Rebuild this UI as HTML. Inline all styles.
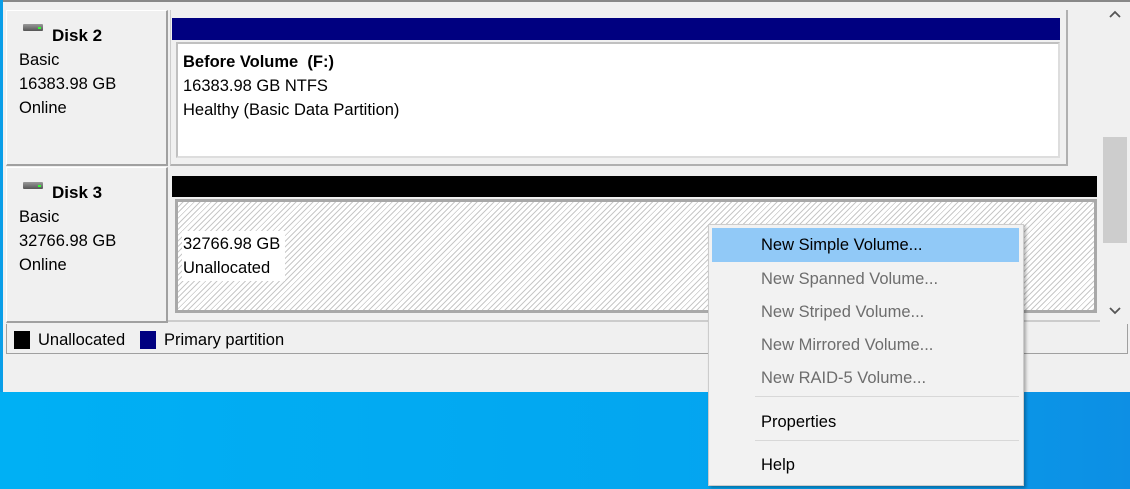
<!DOCTYPE html>
<html><head><style>
*{margin:0;padding:0;box-sizing:border-box}
body{width:1130px;height:489px;overflow:hidden;position:relative;background:linear-gradient(90deg,#00b0f4 0%,#03a6f0 60%,#0d8fe4 100%);font-family:"Liberation Sans",sans-serif;font-size:16.5px;color:#000}
.a{position:absolute}
.win{left:3px;top:0;width:1127px;height:392px;background:#f0f0f0;border-top:2px solid #888}
.lbl{background:#f0f0f0;border:1px solid #fff;border-right:2px solid #a0a0a0;border-bottom:2px solid #a0a0a0}
.t{line-height:24px}
.b{font-weight:bold}
.hatch{background:repeating-linear-gradient(135deg,#fff 0 3px,#c8c8c8 3px 4px)}
.mi{position:absolute;left:52px;font-size:16.5px}
.dis{color:#6d6d6d}
</style></head><body>
<div class="a" style="left:0;top:0;width:3px;height:392px;background:#0a9ee8"></div>
<div class="a win"></div>
<!-- Disk 2 -->
<div class="a lbl" style="left:6px;top:10px;width:162px;height:156px"></div>
<div class="a" style="left:23px;top:24px;width:20px;height:7px;background:linear-gradient(#9a9a9a,#555);border-radius:1px"></div>
<div class="a" style="left:38px;top:27px;width:3px;height:2px;background:#3f3"></div>
<div class="a t b" style="left:52px;top:24px;font-size:17px">Disk 2</div>
<div class="a t" style="left:19px;top:48px">Basic<br>16383.98 GB<br>Online</div>
<div class="a" style="left:170px;top:10px;width:898px;height:156px;border-right:2px solid #b0b0b0;border-bottom:2px solid #b0b0b0;border-left:1px solid #ccc"></div>
<div class="a" style="left:172px;top:18px;width:888px;height:22px;background:#000080"></div>
<div class="a" style="left:176px;top:42px;width:884px;height:116px;background:#fff;border:2px solid #c0c0c0;border-right-color:#ddd;border-bottom-color:#ddd"></div>
<div class="a t" style="left:183px;top:50px"><b>Before Volume&nbsp; (F:)</b><br>16383.98 GB NTFS<br>Healthy (Basic Data Partition)</div>
<!-- Disk 3 -->
<div class="a lbl" style="left:6px;top:167px;width:162px;height:156px"></div>
<div class="a" style="left:23px;top:182px;width:20px;height:7px;background:linear-gradient(#9a9a9a,#555);border-radius:1px"></div>
<div class="a" style="left:38px;top:185px;width:3px;height:2px;background:#3f3"></div>
<div class="a t b" style="left:52px;top:181px;font-size:17px">Disk 3</div>
<div class="a t" style="left:19px;top:205px">Basic<br>32766.98 GB<br>Online</div>
<div class="a" style="left:172px;top:176px;width:925px;height:21px;background:#000"></div>
<div class="a hatch" style="left:175px;top:199px;width:922px;height:114px;border:3px solid #a8a8a8"></div>
<div class="a" style="left:182px;top:231px;width:103px;height:50px;background:#fff"></div>
<div class="a t" style="left:183px;top:232px">32766.98 GB<br>Unallocated</div>
<div class="a" style="left:168px;top:320px;width:932px;height:2px;background:#ccc"></div>
<!-- scrollbar -->
<div class="a" style="left:1102px;top:2px;width:27px;height:320px;background:#f0f0f0"></div>
<div class="a" style="left:1103px;top:137px;width:24px;height:106px;background:#cdcdcd"></div>
<svg class="a" style="left:1108px;top:10px" width="14" height="10"><path d="M2 7 L7 2 L12 7" fill="none" stroke="#555" stroke-width="1.8"/></svg>
<svg class="a" style="left:1108px;top:306px" width="14" height="10"><path d="M2 2 L7 7 L12 2" fill="none" stroke="#555" stroke-width="1.8"/></svg>
<!-- legend -->
<div class="a" style="left:6px;top:324px;width:1122px;height:30px;border:1px solid #a0a0a0;border-top:none;background:#f0f0f0"></div>
<div class="a" style="left:14px;top:331px;width:16px;height:18px;background:#000"></div>
<div class="a" style="left:38px;top:331px">Unallocated</div>
<div class="a" style="left:140px;top:331px;width:16px;height:18px;background:#000080"></div>
<div class="a" style="left:164px;top:331px">Primary partition</div>
<!-- menu -->
<div class="a" style="left:708px;top:224px;width:316px;height:262px;background:#f2f2f2;border:1px solid #ccc;box-shadow:2px 2px 3px rgba(0,0,0,.3)">
<div class="a" style="left:3px;top:3px;width:307px;height:34px;background:#91c9f7"></div>
<div class="mi" style="top:11px">New Simple Volume...</div>
<div class="mi dis" style="top:45px">New Spanned Volume...</div>
<div class="mi dis" style="top:78px">New Striped Volume...</div>
<div class="mi dis" style="top:111px">New Mirrored Volume...</div>
<div class="mi dis" style="top:144px">New RAID-5 Volume...</div>
<div class="a" style="left:46px;top:171px;width:264px;height:1px;background:#d8d8d8"></div>
<div class="mi" style="top:188px">Properties</div>
<div class="a" style="left:46px;top:215px;width:264px;height:1px;background:#d8d8d8"></div>
<div class="mi" style="top:231px">Help</div>
</div>
</body></html>
